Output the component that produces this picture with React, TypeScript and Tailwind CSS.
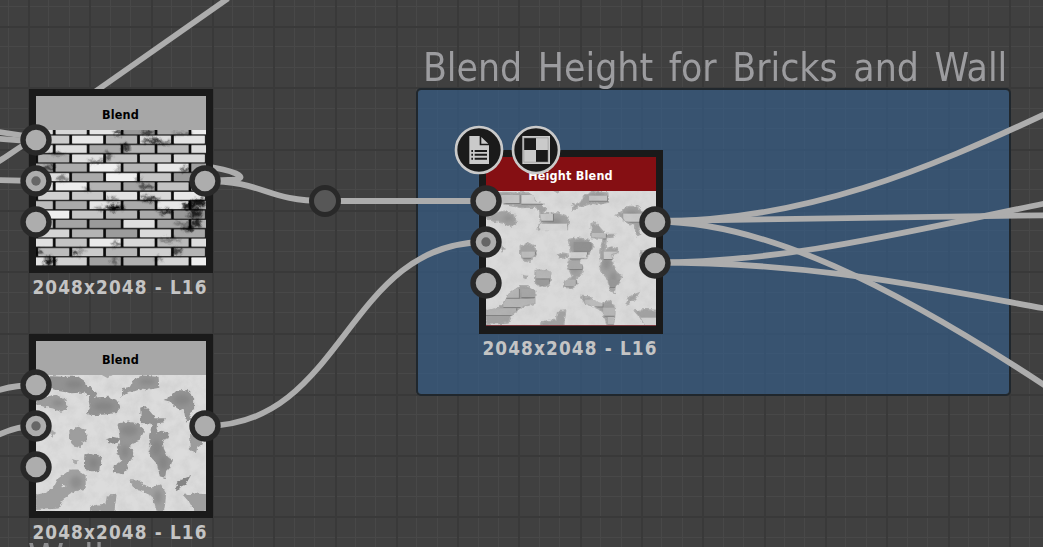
import React from "react";

const PITCH = 61.3;
const majorX = Array.from({ length: 17 }, (_, i) => Math.round(29 + i * PITCH));
const majorY = Array.from({ length: 9 }, (_, i) => Math.round(27 + i * PITCH));
const minorX = Array.from({ length: 52 }, (_, i) => i).filter((i) => i % 3 !== 1).map((i) => Math.round(29 + (i - 1) * (PITCH / 3)) - 1);
const minorY = Array.from({ length: 28 }, (_, i) => i).filter((i) => i % 3 !== 1).map((i) => Math.round(27 + (i - 1) * (PITCH / 3)) - 1);

function Grid() {
  return (
    <svg className="absolute inset-0" width="1043" height="547" shapeRendering="crispEdges">
      {minorX.map((x) => <rect key={"a" + x} x={x} y="0" width="1" height="547" fill="#484848" />)}
      {minorY.map((y) => <rect key={"b" + y} x="0" y={y} width="1043" height="1" fill="#484848" />)}
      {majorX.map((x) => <rect key={"c" + x} x={x - 1} y="0" width="2" height="547" fill="#393939" />)}
      {majorY.map((y) => <rect key={"d" + y} x="0" y={y - 1} width="1043" height="2" fill="#393939" />)}
    </svg>
  );
}

const links = [
  "M228 -1.5 L91 94.500",
  "M-4 131.5 L36 137.5",
  "M-4 138.5 L36 141.5",
  "M-4 163 C8 156 20 146 36 138",
  "M-4 180 L36 181",
  "M205 166 C218 168 230 171 236 173.5 C244 177 241 180 228 180 L205 181",
  "M205 181 C265 181 265 201 325 201 L486 201",
  "M205 426 C345 426 345 242 486 242",
  "M-4 391 C8 387 20 385 36 385",
  "M-4 436 C8 430 20 426 36 426",
  "M655 221.5 C805 221.5 930 168 1045 114",
  "M655 221 L1045 215.3",
  "M655 221.5 C765 221.5 893 286 1045 385.5",
  "M655 262.5 C788 262.5 913 230 1045 203.5",
  "M655 262.5 C812 262.5 920 286 1045 308.5",
];

function Links() {
  return (
    <svg className="absolute inset-0" width="1043" height="547" fill="none" stroke="#adadad" strokeWidth="5.8">
      {links.map((d) => <path key={d} d={d} />)}
      <circle cx="325" cy="201" r="13.5" fill="#575757" stroke="#292929" strokeWidth="5" />
    </svg>
  );
}

const blobs: [string, string][] = [
  ["M24 24 L70 20 L110 22 L150 22 L168 34 L170 48 L192 56 L202 70 L196 84 L240 82 L262 90 L272 106 L264 126 L230 130 L196 132 L180 130 L190 108 L184 76 L166 64 L130 66 L96 60 L60 50 L24 52Z", "#929292"],
  ["M24 96 L50 82 L84 76 L110 90 L114 112 L98 122 L76 112 L46 106Z", "#9c9c9c"],
  ["M282 74 L286 56 L306 52 L318 30 L344 18 L388 22 L390 50 L360 56 L340 52 L318 60 L300 62Z", "#989898"],
  ["M226 14 L246 14 L238 21Z", "#a8a8a8"],
  ["M412 88 L430 78 L446 62 L474 62 L494 82 L494 118 L480 128 L486 146 L474 150 L468 118 L440 108 L428 92Z", "#949494"],
  ["M338 114 L350 110 L374 138 L376 146 L408 146 L404 154 L384 156 L380 190 L400 184 L420 192 L418 202 L398 208 L404 236 L416 262 L430 268 L422 292 L410 304 L408 320 L396 316 L388 280 L362 250 L370 228 L364 200 L374 158 L340 156Z", "#929292"],
  ["M270 162 L300 156 L330 164 L346 180 L332 206 L308 216 L302 232 L316 246 L306 268 L294 278 L296 296 L278 308 L256 304 L258 290 L282 274 L268 240 L278 216 L276 200Z", "#969696"],
  ["M238 208 L252 202 L272 206 L266 216 L246 218Z", "#8c8c8c"],
  ["M126 184 L148 172 L170 180 L174 208 L160 216 L156 230 L138 226 L128 206Z", "#9e9e9e"],
  ["M174 254 L190 250 L218 260 L214 298 L190 304 L172 294Z", "#929292"],
  ["M24 376 L60 368 L80 350 L92 326 L128 300 L146 300 L170 316 L170 354 L136 362 L104 384 L90 412 L60 414 L24 416Z M96 350 L106 340 L116 346 L106 358Z", "#a0a0a0"],
  ["M188 412 L210 404 L234 404 L238 378 L262 376 L256 422 L188 422Z", "#a0a0a0"],
  ["M308 332 L336 334 L344 346 L370 354 L396 344 L410 370 L408 398 L404 422 L386 422 L380 398 L370 374 L344 362 L322 356Z", "#a0a0a0"],
  ["M444 354 L454 332 L480 322 L468 342Z", "#858585"],
  ["M468 376 L500 372 L534 374 L534 422 L500 422 L484 394Z", "#9f9f9f"],
  ["M484 196 L510 198 L520 220 L504 230 L500 246 L486 236Z", "#9c9c9c"],
  ["M66 178 L80 188 L72 198Z M136 270 L148 272 L142 280Z", "#aaaaaa"],
];

const cores: [number, number, number, number][] = [
  [138, 42, 26, 12], [226, 108, 30, 13], [90, 98, 18, 10], [356, 34, 24, 9], [460, 88, 26, 16], [302, 180, 26, 16],
  [384, 234, 16, 24], [404, 276, 14, 22], [196, 278, 14, 16], [290, 244, 12, 18], [144, 336, 18, 20], [388, 380, 12, 20],
];

function Filters({ id }: { id: string }) {
  return (
    <defs>
      <filter id={id + "rough"} x="-5%" y="-5%" width="110%" height="110%" colorInterpolationFilters="sRGB">
        <feTurbulence type="fractalNoise" baseFrequency="0.09" numOctaves={2} seed={4} result="n" />
        <feDisplacementMap in="SourceGraphic" in2="n" scale={13} xChannelSelector="R" yChannelSelector="G" />
        <feGaussianBlur stdDeviation={1.3} />
      </filter>
      <filter id={id + "soft"} x="-20%" y="-20%" width="140%" height="140%" colorInterpolationFilters="sRGB">
        <feGaussianBlur stdDeviation={6} />
      </filter>
      <filter id={id + "smudge"} x="-5%" y="-5%" width="110%" height="110%" colorInterpolationFilters="sRGB">
        <feTurbulence type="fractalNoise" baseFrequency="0.06" numOctaves={2} seed={8} result="n" />
        <feGaussianBlur in="SourceGraphic" stdDeviation={4} result="s" />
        <feDisplacementMap in="s" in2="n" scale={24} xChannelSelector="R" yChannelSelector="G" />
        <feGaussianBlur stdDeviation={2} />
      </filter>
      <filter id={id + "grain"} x="0" y="0" width="100%" height="100%" colorInterpolationFilters="sRGB">
        <feTurbulence type="fractalNoise" baseFrequency="0.03" numOctaves={4} seed={2} />
        <feColorMatrix values="0 0 0 0 0.55  0 0 0 0 0.55  0 0 0 0 0.55  0.7 0 0 0 -0.24" />
      </filter>
    </defs>
  );
}

function Blobs({ id }: { id: string }) {
  return (
    <>
      <g filter={`url(#${id}rough)`} strokeWidth="5" fillRule="evenodd">
        {blobs.map(([d, c]) => <path key={d} d={d} fill={c} stroke={c} />)}
      </g>
      <g filter={`url(#${id}soft)`} fill="#757575" opacity="0.4">
        {cores.map(([x, y, rx, ry]) => <ellipse key={x} cx={x} cy={y} rx={rx} ry={ry} />)}
      </g>
    </>
  );
}

function WallTexture() {
  return (
    <svg className="block" width="170" height="136" viewBox="24 14 508 408" preserveAspectRatio="none">
      <Filters id="w" />
      <rect x="24" y="14" width="508" height="408" fill="#dcdcdc" />
      <rect x="24" y="14" width="508" height="408" filter="url(#wgrain)" opacity="0.35" />
      <Blobs id="w" />
    </svg>
  );
}

const exposed: [number, number, number, number, string][] = [
  [70, 30, 54, 24, "#c3c3c3"], [130, 30, 62, 26, "#d0d0d0"], [332, 32, 54, 15, "#c4c4c4"], [180, 87, 44, 20, "#c8c8c8"],
  [182, 116, 86, 22, "#d6d6d6"], [434, 86, 56, 24, "#c9c9c9"], [340, 144, 42, 16, "#bcbcbc"], [286, 171, 50, 26, "#909090"],
  [268, 202, 58, 18, "#cfcfcf"], [130, 200, 40, 18, "#bdbdbd"], [376, 200, 46, 22, "#c8c8c8"], [272, 228, 40, 24, "#a9a9a9"],
  [174, 256, 46, 24, "#b6b6b6"], [174, 284, 38, 18, "#9a9a9a"], [260, 284, 32, 20, "#b3b3b3"], [388, 284, 34, 22, "#979797"],
  [84, 312, 38, 26, "#b4b4b4"], [130, 312, 40, 24, "#a6a6a6"], [76, 342, 94, 24, "#b6b6b6"], [24, 370, 90, 20, "#b2b2b2"],
  [320, 344, 52, 20, "#bbbbbb"], [374, 368, 36, 24, "#b5b5b5"], [388, 396, 20, 22, "#b9b9b9"], [486, 398, 48, 22, "#d0d0d0"],
];

function HeightTexture() {
  return (
    <svg className="block" width="170" height="135" viewBox="24 18 508 405" preserveAspectRatio="none">
      <Filters id="h" />
      <clipPath id="hclip">
        {blobs.map(([d]) => <path key={d} d={d} />)}
      </clipPath>
      <rect x="24" y="18" width="508" height="405" fill="#dadada" />
      <g transform="translate(0 2)">
        <g filter="url(#hrough)" fillRule="evenodd">
          {blobs.map(([d]) => <path key={d} d={d} fill="#a2a2a2" stroke="#aeaeae" strokeWidth="4" />)}
        </g>
        <g filter="url(#hsoft)" fill="#606060" opacity="0.28">
          {cores.map(([x, y, rx, ry]) => <ellipse key={x} cx={x} cy={y} rx={rx * 0.8} ry={ry * 0.8} />)}
        </g>
      </g>
      <path d="M182 138V118H268V136 M270 221H326V202 M434 110V88 M130 57H200" fill="none" stroke="#9a9a9a" strokeWidth="2.5" opacity="0.8" />
      <path d="M186 120H266V137H186Z M272 203H323V218H272Z" fill="#d6d6d6" />
      <g clipPath="url(#hclip)">
        {exposed.map(([x, y, w, h, c]) => (
          <g key={`${x}-${y}`}>
            <path d={`M${x} ${y + h + 1.5}H${x + w + 1.5}V${y}`} fill="none" stroke="#777777" strokeWidth="3.5" opacity="0.75" />
            <rect x={x} y={y} width={w} height={h} fill={c} />
          </g>
        ))}
      </g>
      <rect x="24" y="18" width="508" height="405" filter="url(#hgrain)" opacity="0.3" />
      <rect x="24" y="420" width="508" height="3" fill="#7a3a40" />
    </svg>
  );
}

const brickTones: string[][] = [
  ["#ddd", "#d8d8d8", "#e6e6e6", "#999", "#aaa", "#eee"],
  ["#ccc", "#e8e8e8", "#b4b4b4", "#ddd", "#e4e4e4"],
  ["#ddd", "#dedede", "#a8a8a8", "#b4b4b4", "#b8b8b8", "#ddd"],
  ["#b0b0b0", "#e0e0e0", "#c2c2c2", "#c8c8c8", "#d8d8d8"],
  ["#aaa", "#acacac", "#efefef", "#b6b6b6", "#e8e8e8", "#a0a0a0"],
  ["#ddd", "#aaa", "#efefef", "#c6c6c6", "#9a9a9a"],
  ["#ddd", "#ededed", "#b4b4b4", "#a6a6a6", "#c2c2c2", "#ccc"],
  ["#d0d0d0", "#c8c8c8", "#e2e2e2", "#d8d8d8", "#e8e8e8"],
  ["#bcbcbc", "#aaa", "#e4e4e4", "#aaa", "#e8e8e8", "#aaa"],
  ["#eee", "#c6c6c6", "#b4b4b4", "#aaa", "#999"],
  ["#bbb", "#a4a4a4", "#9a9a9a", "#e0e0e0", "#a6a6a6", "#b4b4b4"],
  ["#d4d4d4", "#b4b4b4", "#9c9c9c", "#dadada", "#a8a8a8"],
  ["#e0e0e0", "#c4c4c4", "#eaeaea", "#d8d8d8", "#bababa", "#ddd"],
  ["#bcbcbc", "#ccc", "#b6b6b6", "#d0d0d0", "#b4b4b4"],
  ["#e4e4e4", "#d0d0d0", "#a2a2a2", "#b0b0b0", "#d4d4d4", "#eee"],
];

const smudges: [number, number, number, number, number][] = [
  [268, 22, 14, 6, 0.8], [360, 22, 22, 5, 0.8], [460, 24, 30, 3, 0.7], [370, 46, 32, 5, 0.9], [400, 52, 30, 4, 0.7],
  [292, 66, 10, 12, 0.7], [86, 84, 24, 3, 0.8], [205, 108, 26, 3, 0.8], [240, 94, 10, 12, 0.5], [60, 128, 22, 9, 0.6],
  [104, 160, 18, 7, 0.5], [270, 128, 6, 12, 0.4], [470, 132, 12, 8, 0.7], [330, 156, 6, 14, 0.5], [354, 184, 24, 7, 0.6],
  [176, 190, 10, 5, 0.5], [366, 222, 30, 7, 0.8], [262, 246, 22, 10, 1], [225, 250, 30, 4, 0.6], [250, 222, 20, 4, 0.6],
  [410, 258, 20, 6, 0.9], [476, 242, 20, 9, 0.9], [508, 232, 24, 10, 0.9], [500, 262, 20, 14, 0.8], [505, 294, 14, 12, 0.8],
  [480, 310, 16, 8, 0.9], [460, 296, 20, 4, 0.5], [420, 343, 38, 3, 0.7], [264, 356, 10, 8, 0.5], [34, 380, 10, 10, 0.6],
  [140, 384, 10, 8, 0.7], [155, 376, 20, 3, 0.5], [445, 378, 14, 7, 0.7], [64, 408, 16, 14, 0.9], [260, 408, 8, 12, 0.4], [390, 402, 16, 4, 0.5],
];

function BrickTexture() {
  return (
    <svg className="block" width="170" height="136" viewBox="24 14 508 408" preserveAspectRatio="none">
      <Filters id="b" />
      <rect x="24" y="14" width="508" height="408" fill="#0c0c0c" />
      {brickTones.map((row, r) => {
        const first = r % 2 === 0 ? -23 : 26;
        return row.map((c, i) => (
          <g key={`${r}-${i}`}>
            <rect x={first + i * 101.4 + 3.5} y={r * 28.1 + 1} width={95} height={27.2} fill="#484848" />
            <rect x={first + i * 101.4 + 4.5} y={r * 28.1 + 3.2} width={92.5} height={23.2} rx="2" fill={c} />
          </g>
        ));
      })}
      <g filter="url(#bsmudge)" fill="#000">
        {smudges.map(([x, y, rx, ry, o]) => <ellipse key={`${x}-${y}`} cx={x} cy={y} rx={rx} ry={ry} opacity={o} />)}
      </g>
    </svg>
  );
}

function Port({ pip }: { pip?: boolean }) {
  return (
    <svg className="block shrink-0" width="32" height="32" viewBox="-16 -16 32 32">
      <circle r="13" fill="#adadad" stroke="#292929" strokeWidth="5.4" />
      {pip && <circle r="4.7" fill="#666666" />}
    </svg>
  );
}

type NodeProps = {
  place: string;
  title: string;
  headerClass: string;
  outputs: React.ReactNode;
  children: React.ReactNode;
};

function GraphNode({ place, title, headerClass, outputs, children }: NodeProps) {
  return (
    <section className={`absolute flex w-[184px] flex-col items-center ${place}`}>
      <div className="flex h-[184px] w-full shrink-0 flex-col overflow-hidden border-[7px] border-[#1a1a1a] bg-[#1a1a1a]">
        <div className={`flex h-[34px] shrink-0 items-center justify-center pt-[4px] pr-[1px] text-[12.5px] font-bold whitespace-nowrap ${headerClass}`}>
          <span className="tracking-[0.2px]">{title}</span>
        </div>
        {children}
      </div>
      <div className="mt-[4px] pr-[2px] text-[18.8px] leading-[22px] font-bold tracking-[1.15px] whitespace-nowrap text-[#c4c4c4]">2048x2048 - L16</div>
      <div className="absolute top-[35px] -left-[9px] flex w-[201px] items-start justify-between">
        <div className="flex flex-col gap-[9px]">
          <Port />
          <Port pip />
          <Port />
        </div>
        {outputs}
      </div>
    </section>
  );
}

function Badge({ children }: { children: React.ReactNode }) {
  return (
    <svg className="block" width="50" height="50" viewBox="-75 -75 150 150">
      <circle r="69" fill="#1a1a1a" stroke="#cacaca" strokeWidth="8" />
      {children}
    </svg>
  );
}

export default function App() {
  return (
    <div className="relative h-[547px] w-[1043px] overflow-hidden bg-[#404040] [font-family:'DejaVu_Sans_Condensed','DejaVu_Sans',sans-serif]">
      <Grid />
      <section className="absolute top-[42px] left-[416px] flex w-[595px] flex-col">
        <h2 className="h-[46px] origin-left scale-x-[0.984] pt-px pl-[7px] text-[39.4px] leading-[48px] whitespace-nowrap text-[#9c9c9f] [word-spacing:4.6px]">
          Blend Height for Bricks and Wall
        </h2>
        <div className="h-[308px] rounded-[5px] border-2 border-[#20272d] bg-[rgba(52,93,138,0.65)] bg-clip-padding" />
      </section>
      <h2 className="absolute top-[534px] left-[28px] origin-left scale-x-[1.03] text-[39.4px] leading-[48px] whitespace-nowrap text-[#8b8b8d]">
        Wall
      </h2>
      <Links />
      <GraphNode place="left-[29px] top-[89px]" title="Blend" headerClass="bg-[#a7a7a7] text-black" outputs={<div className="pt-[41px]"><Port /></div>}>
        <BrickTexture />
      </GraphNode>
      <GraphNode place="left-[29px] top-[334px]" title="Blend" headerClass="bg-[#a7a7a7] text-black" outputs={<div className="pt-[41px]"><Port /></div>}>
        <WallTexture />
      </GraphNode>
      <GraphNode
        place="left-[479px] top-[150px]"
        title="Height Blend"
        headerClass="bg-[#850f13] text-white"
        outputs={<div className="flex flex-col gap-[9px] pt-[20.5px]"><Port /><Port /></div>}
      >
        <HeightTexture />
      </GraphNode>
      <div className="absolute top-[125px] left-[453.700px] flex gap-[7.600px]">
        <Badge>
          <path d="M-29 -42H2V-14H30V42H-29Z" fill="#cacaca" />
          <path d="M7 -39L28 -19H7Z" fill="#cacaca" />
          <path d="M-23 3H-18M-13 3H24M-23 14H-18M-13 14H24M-23 26H-18M-13 26H24" stroke="#1a1a1a" strokeWidth="6" />
        </Badge>
        <Badge>
          <path d="M-41 -42H42V42H-41Z" fill="#cacaca" />
          <path d="M-36 -36H0V0H36V36H0V0H-36Z" fill="#1a1a1a" />
          <path d="M-36.500 -36.500H36.500V36.500H-36.500Z" fill="none" stroke="#999999" strokeWidth="2" />
        </Badge>
      </div>
    </div>
  );
}
